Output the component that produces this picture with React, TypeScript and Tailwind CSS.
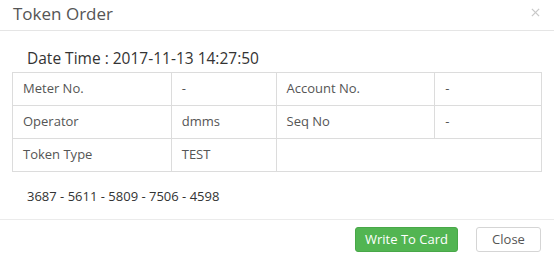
import React from "react";

const rows: [string, string, string, string][] = [
    ["Meter No.", "-", "Account No.", "-"],
    ["Operator", "dmms", "Seq No", "-"],
    ["Token Type", "TEST", "", ""],
];

const Cell: React.FC<{ text: string; w: string }> = ({text, w}) => (
    <td className={`${w} border border-[#dcdcdc] pl-[10px] text-[13px] text-[#555] align-middle`}>{text}</td>
);

export default function App() {
    return (
        <div className="w-[554px] h-[258px] bg-white flex flex-col" style={{fontFamily: "'Open Sans', sans-serif"}}>
            {/* Header */}
            <div className="h-[31px] border-b border-[#e5e5e5] flex items-center justify-between pl-[13px] pr-[14px]">
                <span className="text-[17px] leading-[23px] text-[#555] -mt-[4px]">Token Order</span>
                <span className="text-[#c8c8c8] -mt-[6px]">
                    <svg width="9" height="9" viewBox="0 0 10 10" stroke="currentColor" strokeWidth={1.4}>
                        <line x1="1" y1="1" x2="9" y2="9"/>
                        <line x1="9" y1="1" x2="1" y2="9"/>
                    </svg>
                </span>
            </div>
            {/* Body */}
            <div className="h-[189px] border-b border-[#ebebeb] px-[12px]">
                <div className="pl-[15px] pt-[17px] text-[15.5px] leading-[20px] text-[#333]">Date Time : 2017-11-13 14:27:50</div>
                <table className="mt-[4px] w-[530px] border-collapse">
                    <tbody>
                    {rows.map((r, i) => (
                        <tr key={i} className="h-[33px]">
                            <Cell text={r[0]} w="w-[159px]"/>
                            <Cell text={r[1]} w="w-[105px]"/>
                            {i < 2 ? (
                                <>
                                    <Cell text={r[2]} w="w-[159px]"/>
                                    <Cell text={r[3]} w="w-[107px]"/>
                                </>
                            ) : (
                                <td colSpan={2} className="border border-[#dcdcdc]"/>
                            )}
                        </tr>
                    ))}
                    </tbody>
                </table>
                <div className="pl-[15px] pt-[15px] text-[13px] leading-[18px] font-medium text-[#333]">
                    3687 - 5611 - 5809 - 7506 - 4598
                </div>
            </div>
            {/* Footer */}
            <div className="flex justify-end items-start gap-[18px] pt-[7px] pr-[13px]">
                <button className="h-[25px] w-[103px] rounded-[3px] bg-[#52b552] border border-[#48a848] text-white text-[13px] leading-none">
                    Write To Card
                </button>
                <button className="h-[25px] w-[65px] rounded-[3px] bg-white border border-[#d5d5d5] text-[#555] text-[13px] leading-none">
                    Close
                </button>
            </div>
        </div>
    );
}
